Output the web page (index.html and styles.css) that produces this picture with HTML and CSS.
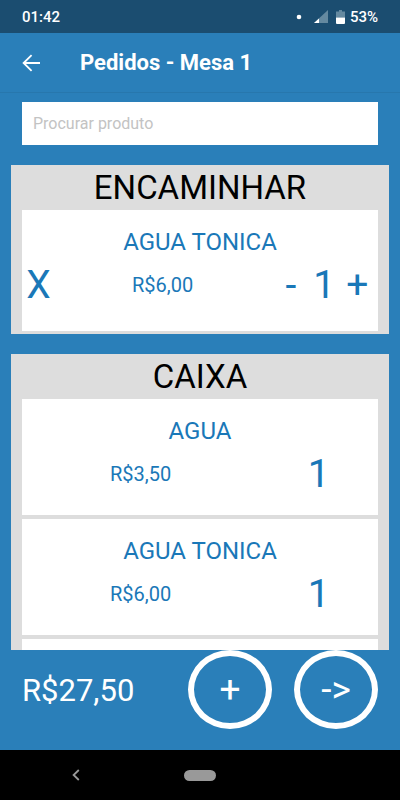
FILE: index.html
```html
<!DOCTYPE html>
<html lang="pt-BR">
<head>
<meta charset="utf-8">
<meta name="viewport" content="width=device-width, initial-scale=1">
<title>Pedidos - Mesa 1</title>
<link rel="stylesheet" href="styles.css">
</head>
<body>
<div class="status">
  <span>01:42</span>
  <div class="status-icons">
    <svg class="dot" width="6" height="6" viewBox="0 0 6 6" aria-hidden="true"><circle cx="3" cy="3" r="2.3" fill="#fff"/></svg>
    <svg class="signal" width="14" height="14" viewBox="0 0 14 14" aria-hidden="true"><path d="M14 0V13H0Z" fill="#6489a0"/><path d="M5 8.4V13H0Z" fill="#fff"/></svg>
    <svg class="battery" width="9" height="14" viewBox="0 0 9 14" aria-hidden="true"><path d="M3 0H6V1.5H9V7.5H0V1.5H3Z" fill="#6489a0"/><path d="M0 7.5H9V13Q9 14 8 14H1Q0 14 0 13Z" fill="#fff"/></svg>
    <span>53%</span>
  </div>
</div>
<header class="appbar">
  <button class="back" type="button" aria-label="Voltar">
    <svg width="18" height="18" viewBox="0 0 18 18" fill="none" stroke="#fff" stroke-width="1.8" aria-hidden="true"><path d="M18 9H1.5M9.6 1.2L1.6 9L9.6 16.8"/></svg>
  </button>
  <h1>Pedidos - Mesa 1</h1>
</header>
<main>
  <input class="search" type="text" placeholder="Procurar produto" aria-label="Procurar produto">
  <section class="panel">
    <h2>ENCAMINHAR</h2>
    <article class="item pending">
      <h3>AGUA TONICA</h3>
      <div class="row editable">
        <button class="big" type="button" aria-label="Remover">X</button>
        <span class="price">R$6,00</span>
        <div class="stepper">
          <button class="big" type="button">-</button>
          <span class="big">1</span>
          <button class="big" type="button">+</button>
        </div>
      </div>
    </article>
  </section>
  <section class="panel list">
    <h2>CAIXA</h2>
    <article class="item">
      <h3>AGUA</h3>
      <div class="row"><span class="price">R$3,50</span><span class="big">1</span></div>
    </article>
    <article class="item">
      <h3>AGUA TONICA</h3>
      <div class="row"><span class="price">R$6,00</span><span class="big">1</span></div>
    </article>
    <article class="item"></article>
  </section>
</main>
<footer class="total">
  <span class="sum">R$27,50</span>
  <button class="round" type="button">+</button>
  <button class="round" type="button">-&gt;</button>
</footer>
<nav class="sysnav">
  <button type="button" aria-label="Voltar">
    <svg width="8" height="12" viewBox="0 0 8 12" fill="none" stroke="#999" stroke-width="1.8" aria-hidden="true"><path d="M6.8 1L1.6 6L6.8 11"/></svg>
  </button>
  <button class="pill" type="button" aria-label="Início"></button>
  <span></span>
</nav>
</body>
</html>
```
FILE: styles.css
```css
* {
  box-sizing: border-box;
}

body {
  margin: 0;
  height: 100vh;
  display: flex;
  flex-direction: column;
  overflow: hidden;
  background: #2a7fb9;
  color: #fff;
  font-family: Roboto, sans-serif;
}

h1, h2, h3 {
  margin: 0;
  font-weight: 400;
}

button {
  padding: 0;
  border: 0;
  background: none;
  color: inherit;
  font: inherit;
}

svg {
  display: block;
}

.status {
  flex: none;
  height: 33px;
  padding: 0 22px;
  display: flex;
  align-items: center;
  justify-content: space-between;
  background: #1b4d70;
  font-size: 15px;
  font-weight: 500;
}

.status-icons {
  display: flex;
  align-items: center;
}

.signal {
  margin-left: 12px;
}

.battery {
  margin: 0 5px 0 8px;
}

.appbar {
  flex: none;
  height: 60px;
  padding: 0 22px;
  display: flex;
  align-items: center;
  gap: 40px;
  border-bottom: 1px solid #2777ad;
}

.appbar h1 {
  font-size: 22px;
  font-weight: 700;
}

main {
  flex: 1;
  min-height: 0;
  padding: 9px 11px 0;
  display: flex;
  flex-direction: column;
  gap: 20px;
}

.search {
  flex: none;
  height: 43px;
  margin: 0 11px;
  padding: 0 11px;
  border: 0;
  border-radius: 0;
  background: #fff;
  color: #333;
  font: 16px Roboto, sans-serif;
}

.search::placeholder {
  color: #c3c3c3;
}

.panel {
  flex: none;
  padding: 0 11px 3px;
  background: #ddd;
  color: #1a78b8;
  text-align: center;
}

.panel h2 {
  color: #000;
  font-size: 33px;
  line-height: 45px;
}

.list {
  flex: 1;
  min-height: 0;
  overflow: hidden;
}

.item {
  height: 116px;
  margin-bottom: 4px;
  padding-top: 18px;
  background: #fff;
}

.pending {
  height: 121px;
  margin: 0;
}

.item h3 {
  font-size: 24px;
  line-height: 28px;
}

.row {
  height: 58px;
  display: grid;
  grid-template-columns: 2fr 1fr;
  align-items: center;
}

.editable {
  grid-template-columns: 33px 2fr 1fr;
}

.price {
  font-size: 20px;
}

.big {
  font-size: 39px;
}

.stepper {
  padding: 0 4px;
  display: grid;
  grid-template-columns: repeat(3, 1fr);
}

.total {
  flex: none;
  height: 100px;
  padding: 0 22px;
  display: flex;
  align-items: flex-start;
  gap: 22px;
}

.sum {
  flex: 1;
  font-size: 31px;
  line-height: 82px;
}

.round {
  width: 84px;
  height: 79px;
  border: 6px solid #fff;
  border-radius: 50%;
  font-size: 37px;
}

.sysnav {
  flex: none;
  height: 50px;
  padding: 0 61px;
  display: grid;
  grid-template-columns: 1fr 32px 1fr;
  align-items: center;
  background: #000;
}

.sysnav button {
  justify-self: start;
  margin-left: 11px;
}

.sysnav .pill {
  width: 32px;
  height: 11px;
  margin: 0;
  border-radius: 6px;
  background: #999;
}
```
